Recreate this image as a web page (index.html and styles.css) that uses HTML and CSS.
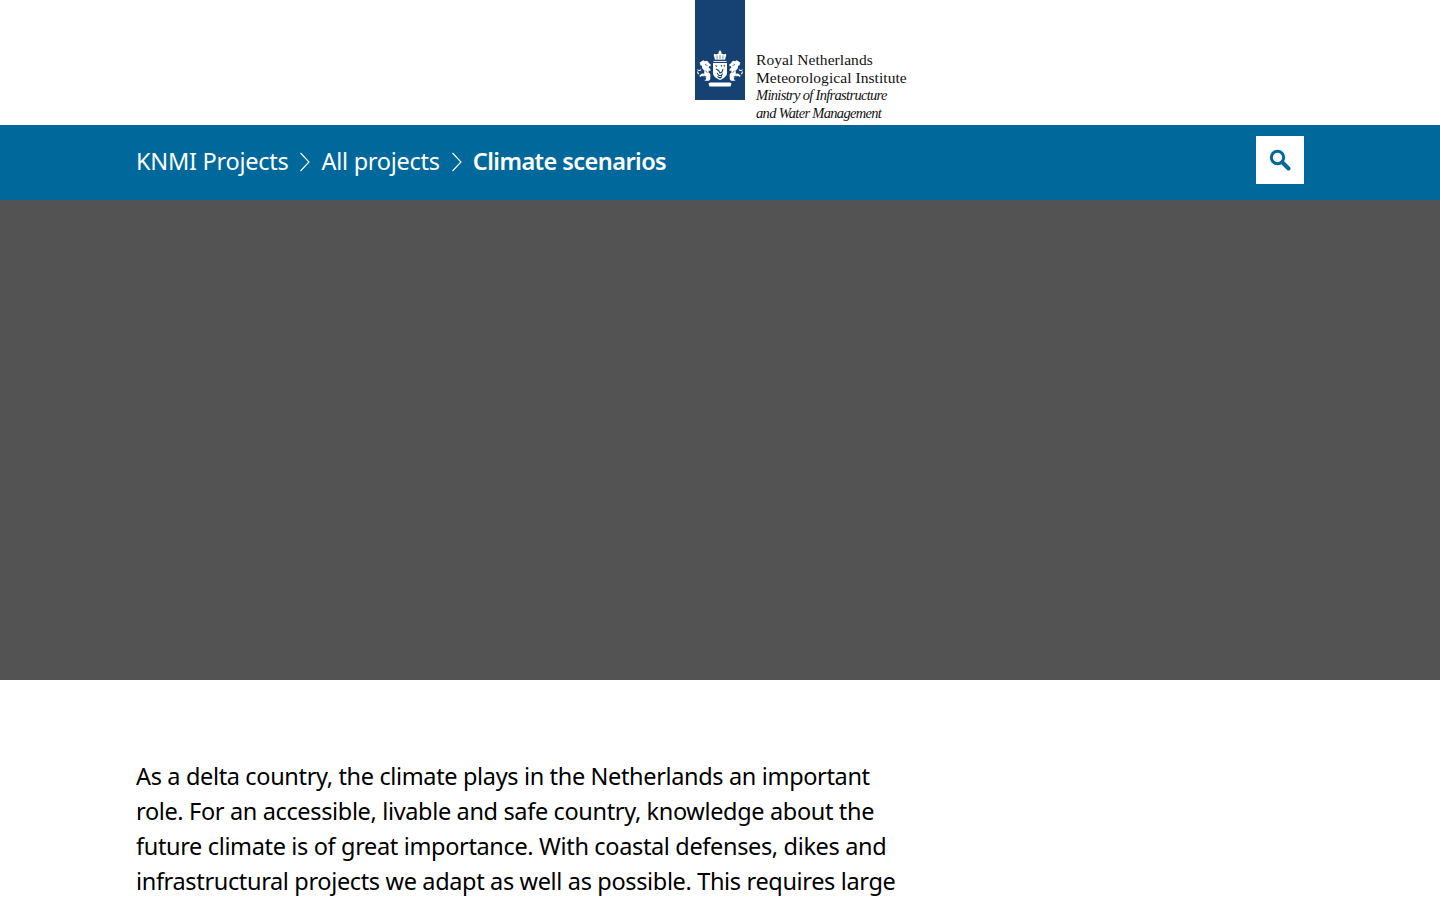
FILE: index.html
```html
<!DOCTYPE html>
<html>
  <head>
    <title>Climate scenarios - KNMI Projects</title>
    <link rel="stylesheet" href="styles.css">
  </head>
  <body>
    <header class="masthead">
      <div class="logo">
        <div class="logo-bar">
          <svg class="crest" width="46" height="37" viewBox="0 0 46 37">
            <!-- crown -->
            <path fill="#fff" d="M23 0l1 1.500 .8 1-1 .8 3.200 1.200 1.500-.7 .8 1-1.300 5h-10l-1.300-5 .8-1 1.500.7 3.200-1.200-1-.8 .8-1z"/>
            <path fill="none" stroke="#154273" stroke-width=".6" d="M20 5.500v4M23 5v4.500M26 5.500v4"/>
            <!-- mantle line -->
            <path fill="none" stroke="#fff" stroke-width=".9" d="M16.500 11.500h13"/>
            <!-- shield -->
            <path fill="#fff" d="M16 13h14v10c0 3.500-3.500 5.500-7 7-3.500-1.500-7-3.500-7-7z"/>
            <path fill="none" stroke="#154273" stroke-width="1.100" d="M18.500 15.500l1.500 1M24 15l1 1.500M27 15l.5 1.500M19 19l2.500 1.500 1.500 2.500 2-1 1-3M20 23l2 2.500 2.500 0 1-2M20.500 26.500l2.500 1.500 2-1.500"/>
            <!-- left lion -->
            <path fill="#fff" d="M5 11l1.500-.7 1.200 1 1.800-.6 1.700 1 1 1.800 1.400.6v2.400l-1.500-.4-.5 1.400 1.800 1.400v2.200l-1.700-.6-.1 2 1.700 1.500v5l-1.200 1.800h-4.600l1.800-2-1.200-2.200-3.300-.6-1.800 1-.6-1.600 2.600-2 2.100.4 .3-3-2.300-2.500-.2-2.500-1.800-.5.4-1.600-1.200-.6z"/>
            <path fill="none" stroke="#154273" stroke-width=".7" d="M8 14.500l2.500 1M8.500 21l2 1.500M6.500 26l3 .8"/>
            <path fill="none" stroke="#fff" stroke-width="1.100" d="M.5 19.500c1.200 1.600 2.500 1.200 3.500 0M2 24c-1.200-.3-1.500-1.500-1-2.500"/>
            <!-- right lion -->
            <path fill="#fff" d="M41 11l-1.500-.7-1.200 1-1.800-.6-1.700 1-1 1.800-1.400.6v2.400l1.500-.4 .5 1.400-1.800 1.400v2.200l1.700-.6 .1 2-1.700 1.500v5l1.200 1.800h4.600l-1.800-2 1.200-2.200 3.300-.6 1.800 1 .6-1.600-2.600-2-2.100.4-.3-3 2.300-2.500 .2-2.500 1.800-.5-.4-1.600 1.200-.6z"/>
            <path fill="none" stroke="#154273" stroke-width=".7" d="M38 14.500l-2.500 1M37.500 21l-2 1.500M39.500 26l-3 .8"/>
            <path fill="none" stroke="#fff" stroke-width="1.100" d="M45.500 19.500c-1.200 1.600-2.500 1.200-3.500 0M44 24c1.200-.3 1.500-1.500 1-2.500"/>
            <!-- motto band -->
            <path fill="#fff" d="M13 32.500h20l1.500 1-1 3h-21l-1-3z"/>
          </svg>
        </div>
        <div class="logo-text">
          <span>Royal Netherlands</span>
          <span>Meteorological Institute</span>
          <em>Ministry of Infrastructure</em>
          <em>and Water Management</em>
        </div>
      </div>
    </header>

    <nav class="navbar">
      <div class="crumbs">
        <a href="#">KNMI Projects</a>
        <svg class="chevron" width="11" height="20" viewBox="0 0 11 20"><path d="M1.500 1l8.500 9-8.500 9" fill="none" stroke="#fff" stroke-width="1.100"/></svg>
        <a href="#">All projects</a>
        <svg class="chevron" width="11" height="20" viewBox="0 0 11 20"><path d="M1.500 1l8.500 9-8.500 9" fill="none" stroke="#fff" stroke-width="1.100"/></svg>
        <strong>Climate scenarios</strong>
      </div>
      <button class="search-btn">
        <svg width="22" height="22" viewBox="0 0 22 22">
          <circle cx="8.500" cy="8.500" r="6.200" fill="none" stroke="#01689b" stroke-width="3"/>
          <path d="M13.500 13.500l6 6" stroke="#01689b" stroke-width="4" stroke-linecap="round"/>
        </svg>
      </button>
    </nav>

    <div class="hero"></div>

    <main class="content">
      <p class="intro">As a delta country, the climate plays in the Netherlands an important role. For an accessible, livable and safe country, knowledge about the future climate is of great importance. With coastal defenses, dikes and infrastructural projects we adapt as well as possible. This requires large</p>
    </main>
  </body>
</html>
```

FILE: styles.css
```css
html, body { margin: 0; padding: 0; background: #fff; }
body { font-family: "Noto Sans", sans-serif; color: #000; }

.masthead { height: 125px; }
.logo { display: flex; margin-left: calc(50% - 25px); }
.logo-bar {
	width: 50px; height: 100px; background: #154273;
	display: flex; flex-direction: column; align-items: center; justify-content: flex-end;
	padding-bottom: 13px; box-sizing: border-box;
}
.crest { display: block; flex: none; }
.logo-text {
	display: flex; flex-direction: column;
	margin: 51px 0 0 11px;
	font-family: "Liberation Serif", serif; font-size: 15.500px; line-height: 17.500px; color: #111;
	letter-spacing: 0.060px;
	white-space: nowrap;
}
.logo-text em { font-size: 14.500px; letter-spacing: -0.680px; }
.logo-text em:first-of-type { margin-top: 1px; }

.navbar {
	height: 75px; background: #01689b; box-sizing: border-box;
	padding: 11px 136px 0 136px;
	display: flex; justify-content: space-between; align-items: flex-start;
}
.crumbs {
	display: flex; align-items: center; gap: 11px;
	height: 50px; color: #fff; font-size: 23.500px; letter-spacing: -0.260px;
}
.crumbs a { color: #fff; text-decoration: none; }
.crumbs strong { font-weight: 600; letter-spacing: -0.560px; }
.chevron { margin: 2px 0 0 0; }
.search-btn {
	width: 48px; height: 48px; background: #fff; border: 0; padding: 0;
	display: flex; align-items: center; justify-content: center;
}

.hero { height: 480px; background: #535353; }

.content { padding: 79px 136px 0 136px; }
.intro { margin: 0; width: 770px; font-size: 23.500px; line-height: 35px; letter-spacing: -0.350px; }
```
